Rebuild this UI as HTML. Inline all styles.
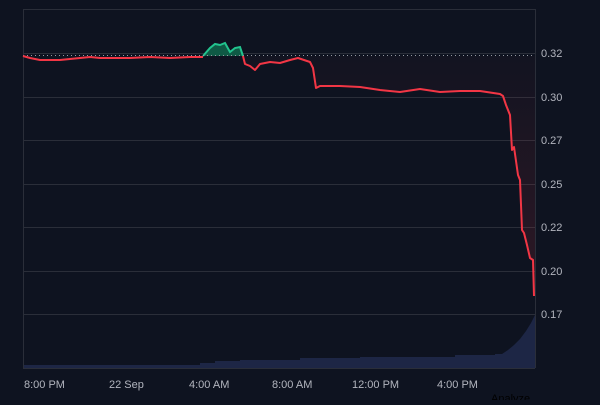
<!DOCTYPE html>
<html><head><style>
body{margin:0;width:600px;height:400px;background:#0e1320;overflow:hidden;font-family:"Liberation Sans",sans-serif}
svg text{font-family:"Liberation Sans",sans-serif;font-size:11px;fill:#b2b5be}
</style></head><body>
<svg width="600" height="400" xmlns="http://www.w3.org/2000/svg">
<defs>
<linearGradient id="rg" x1="0" y1="0" x2="0" y2="1"><stop offset="0" stop-color="#f23645" stop-opacity="0.02"/><stop offset="1" stop-color="#f23645" stop-opacity="0.14"/></linearGradient>
</defs>
<g stroke="#2a2e39" stroke-width="1">
<line x1="23" y1="9.5" x2="535" y2="9.5"/>
<line x1="23.5" y1="9" x2="23.5" y2="368"/>
<line x1="535.5" y1="9" x2="535.5" y2="368"/>
<line x1="23" y1="53.5" x2="535" y2="53.5"/>
<line x1="23" y1="97.5" x2="535" y2="97.5"/>
<line x1="23" y1="140.5" x2="535" y2="140.5"/>
<line x1="23" y1="184.5" x2="535" y2="184.5"/>
<line x1="23" y1="227.5" x2="535" y2="227.5"/>
<line x1="23" y1="271.5" x2="535" y2="271.5"/>
<line x1="23" y1="314.5" x2="535" y2="314.5"/>
<line x1="23" y1="368.5" x2="535" y2="368.5"/>
</g>
<path d="M24 368V365H200V363H215V361H240V360H300V358H360V357H455V355H495V354H502L508 350L514 345L520 339L526 331L531 323L535 315V368Z" fill="#1d2645"/>
<path d="M245 56L245 64L250 66L255 70L260 64L270 62L280 63L290 60L298 58L310 62L313 68L316 88L320 86L340 86L360 87L380 90L400 92L420 89L440 92L460 91L480 91L500 94L503 96L506 105L510 115L512 150L514 147L518 175L520 180L522 230L524 233L527 245L530 258L533 260L534 296L535 296L535 56Z" fill="url(#rg)"/>
<path d="M203 56L210 48L215 44L220 45L225 43L230 52L235 48L240 47L243 56Z" fill="#0f5a45"/>
<path d="M203 56L210 48L215 44L220 45L225 43L230 52L235 48L240 47L243 56" fill="none" stroke="#22c38e" stroke-width="2"/>
<line x1="23" y1="55.5" x2="535" y2="55.5" stroke="#9598a1" stroke-width="1" stroke-dasharray="1,3"/>
<path d="M23 56L30 58L40 60L60 60L80 58L90 57L100 58L130 58L150 57L170 58L190 57L200 57L203 57M243 56L245 64L250 66L255 70L260 64L270 62L280 63L290 60L298 58L310 62L313 68L316 88L320 86L340 86L360 87L380 90L400 92L420 89L440 92L460 91L480 91L500 94L503 96L506 105L510 115L512 150L514 147L518 175L520 180L522 230L524 233L527 245L530 258L533 260L534 296" fill="none" stroke="#f23645" stroke-width="2" stroke-linejoin="round"/>
<text x="541" y="57">0.32</text>
<text x="541" y="101">0.30</text>
<text x="541" y="144">0.27</text>
<text x="541" y="188">0.25</text>
<text x="541" y="231">0.22</text>
<text x="541" y="275">0.20</text>
<text x="541" y="318">0.17</text>
<text x="24" y="388">8:00 PM</text>
<text x="109" y="388">22 Sep</text>
<text x="189" y="388">4:00 AM</text>
<text x="272" y="388">8:00 AM</text>
<text x="352" y="388">12:00 PM</text>
<text x="437" y="388">4:00 PM</text>
<text x="491" y="402" style="fill:#000">Analyze</text>
</svg>
</body></html>
